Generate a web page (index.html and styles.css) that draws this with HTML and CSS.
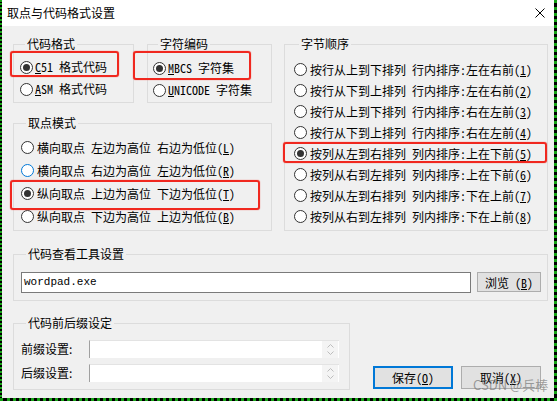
FILE: index.html
```html
<!DOCTYPE html>
<html lang="zh-CN">
<head>
<meta charset="utf-8">
<title>取点与代码格式设置</title>
<link rel="stylesheet" href="styles.css">
</head>
<body>
<div class="frame">
  <div class="window">
    <div class="titlebar">
      <span class="title">取点与代码格式设置</span>
      <svg class="close" width="10" height="10" viewBox="0 0 10 10"><path d="M0.5 0.5L9.5 9.5M9.5 0.5L0.5 9.5" stroke="#000" stroke-width="1" fill="none"/></svg>
    </div>
    <div class="body">
      <div class="top">
        <div class="leftcol">
          <div class="row1">
            <fieldset class="group g-code">
              <legend>代码格式</legend>
              <div class="opt"><span class="radio checked"></span><span class="lbl"><u>C</u>51 格式代码</span></div>
              <div class="opt"><span class="radio"></span><span class="lbl"><u>A</u>SM 格式代码</span></div>
            </fieldset>
            <fieldset class="group g-enc">
              <legend>字符编码</legend>
              <div class="opt"><span class="radio checked"></span><span class="lbl"><u>M</u>BCS 字符集</span></div>
              <div class="opt"><span class="radio"></span><span class="lbl"><u>U</u>NICODE 字符集</span></div>
            </fieldset>
          </div>
          <fieldset class="group g-mode">
            <legend>取点模式</legend>
            <div class="opt"><span class="radio"></span><span class="lbl">横向取点 左边为高位 右边为低位(<u>L</u>)</span></div>
            <div class="opt"><span class="radio hover"></span><span class="lbl">横向取点 右边为高位 左边为低位(<u>R</u>)</span></div>
            <div class="opt"><span class="radio checked"></span><span class="lbl">纵向取点 上边为高位 下边为低位(<u>T</u>)</span></div>
            <div class="opt"><span class="radio"></span><span class="lbl">纵向取点 下边为高位 上边为低位(<u>B</u>)</span></div>
          </fieldset>
        </div>
        <fieldset class="group g-order">
          <legend>字节顺序</legend>
          <div class="opt"><span class="radio"></span><span class="lbl">按行从上到下排列 行内排序:左在右前(<u>1</u>)</span></div>
          <div class="opt"><span class="radio"></span><span class="lbl">按行从下到上排列 行内排序:左在右前(<u>2</u>)</span></div>
          <div class="opt"><span class="radio"></span><span class="lbl">按行从上到下排列 行内排序:右在左前(<u>3</u>)</span></div>
          <div class="opt"><span class="radio"></span><span class="lbl">按行从下到上排列 行内排序:右在左前(<u>4</u>)</span></div>
          <div class="opt"><span class="radio checked"></span><span class="lbl">按列从左到右排列 列内排序:上在下前(<u>5</u>)</span></div>
          <div class="opt"><span class="radio"></span><span class="lbl">按列从右到左排列 列内排序:上在下前(<u>6</u>)</span></div>
          <div class="opt"><span class="radio"></span><span class="lbl">按列从左到右排列 列内排序:下在上前(<u>7</u>)</span></div>
          <div class="opt"><span class="radio"></span><span class="lbl">按列从右到左排列 列内排序:下在上前(<u>8</u>)</span></div>
        </fieldset>
      </div>

      <fieldset class="group g-tool">
        <legend>代码查看工具设置</legend>
        <div class="textfield">wordpad.exe</div>
        <div class="btn btn-browse">浏览 (<u>B</u>)</div>
      </fieldset>

      <div class="bottom">
        <fieldset class="group g-fix">
          <legend>代码前后缀设定</legend>
          <div class="fixrow">
            <span class="fixlabel">前缀设置:</span>
            <div class="spin"><div class="spin-text"></div><div class="spin-btns"><svg width="7" height="4" viewBox="0 0 7 4"><path d="M0.5 3.5L3.5 0.5L6.5 3.5" stroke="#bdbdbd" fill="none"/></svg><svg width="7" height="4" viewBox="0 0 7 4"><path d="M0.5 0.5L3.5 3.5L6.5 0.5" stroke="#bdbdbd" fill="none"/></svg></div></div>
          </div>
          <div class="fixrow">
            <span class="fixlabel">后缀设置:</span>
            <div class="spin"><div class="spin-text"></div><div class="spin-btns"><svg width="7" height="4" viewBox="0 0 7 4"><path d="M0.5 3.5L3.5 0.5L6.5 3.5" stroke="#bdbdbd" fill="none"/></svg><svg width="7" height="4" viewBox="0 0 7 4"><path d="M0.5 0.5L3.5 3.5L6.5 0.5" stroke="#bdbdbd" fill="none"/></svg></div></div>
          </div>
        </fieldset>
        <div class="actions">
          <div class="btn btn-main default">保存(<u>O</u>)</div>
          <div class="btn btn-main">取消(<u>X</u>)</div>
        </div>
      </div>
    </div>

    <div class="mark mark-1"></div>
    <div class="mark mark-2"></div>
    <div class="mark mark-3"></div>
    <div class="mark mark-4"></div>
    <div class="watermark">CSDN @兵棒</div>
  </div>
</div>
</body>
</html>
```

FILE: styles.css
```css
* { box-sizing: border-box; }
html, body { margin: 0; padding: 0; }
body {
  width: 557px;
  height: 401px;
  overflow: hidden;
  background: #000;
  font-family: "Noto Sans CJK SC", sans-serif;
  font-size: 12px;
  color: #000;
}
.frame {
  width: 557px;
  height: 401px;
  background: #000;
  border-left: 2px dotted #17a317;
  border-right: 3px dotted #17a317;
  border-bottom: 3px dotted #17a317;
}
.window {
  position: relative;
  width: 552px;
  height: 398px;
  display: flex;
  flex-direction: column;
  background: #f0f0f0;
}
.titlebar {
  height: 26px;
  flex: 0 0 26px;
  background: #fff;
  display: flex;
  align-items: center;
  justify-content: space-between;
  padding: 0 9px 0 5px;
}
.title { font-size: 12px; line-height: 16px; }
.close { display: block; }

.body {
  flex: 1;
  display: flex;
  flex-direction: column;
  padding: 10px 6px 0 11px;
}

.top {
  display: grid;
  grid-template-columns: 259px 264px;
  column-gap: 12px;
  height: 195px;
}
.leftcol {
  display: flex;
  flex-direction: column;
  gap: 12px;
}
.row1 {
  display: grid;
  grid-template-columns: 121px 125px;
  column-gap: 13px;
  height: 67px;
}

.group {
  margin: 0;
  min-width: 0;
  border: 1px solid #dcdcdc;
  padding: 0;
  display: flex;
  flex-direction: column;
}
.group legend {
  margin-left: 5px;
  padding: 0 2px;
  font-size: 12px;
  line-height: 16px;
  height: 16px;
}

.opt {
  display: flex;
  align-items: center;
  white-space: nowrap;
  height: 22px;
  gap: 2px;
}
.lbl {
  font-family: "Noto Sans Mono CJK SC", "Liberation Mono", "Noto Sans CJK SC", monospace;
  font-size: 12px;
  line-height: 14px;
}
.lbl u { text-underline-offset: 1px; }

.radio {
  flex: 0 0 13px;
  width: 13px;
  height: 13px;
  border-radius: 50%;
  border: 1px solid #333;
  background: #fff;
  position: relative;
}
.radio.hover { border-color: #0078d7; }
.radio.checked::after {
  content: "";
  position: absolute;
  left: 2px;
  top: 2px;
  width: 7px;
  height: 7px;
  border-radius: 50%;
  background: #333;
}

.g-code { height: 67px; padding: 4px 0 0 6px; }
.g-enc { height: 67px; padding: 5px 0 0 5px; }
.g-mode { height: 116px; padding: 5px 0 0 7px; }
.g-mode .opt { height: 23px; gap: 3px; }
.g-order { height: 195px; padding: 7px 0 0 9px; }
.g-order .opt { height: 21px; gap: 3px; }

.g-tool {
  margin-top: 15px;
  height: 55px;
  flex-direction: row;
  align-items: flex-start;
  gap: 6px;
  padding: 10px 6px 0 7px;
}
.textfield {
  flex: 1;
  height: 21px;
  background: #fff;
  border: 1px solid #7a7a7a;
  padding: 0 2px;
  font-family: "Liberation Mono", monospace;
  font-size: 11px;
  line-height: 19px;
}
.btn {
  display: flex;
  align-items: center;
  justify-content: center;
  background: #e1e1e1;
  border: 1px solid #adadad;
  font-family: "Noto Sans Mono CJK SC", "Liberation Mono", "Noto Sans CJK SC", monospace;
  font-size: 12px;
  white-space: nowrap;
}
.btn-browse { width: 64px; height: 20px; }

.bottom {
  margin-top: 14px;
  display: flex;
  align-items: flex-end;
}
.g-fix {
  width: 337px;
  height: 75px;
  padding: 9px 10px 0 7px;
  gap: 6px;
}
.fixrow {
  display: flex;
  align-items: center;
  height: 18px;
}
.fixlabel {
  width: 68px;
  font-size: 12px;
  line-height: 16px;
}
.spin {
  width: 250px;
  height: 18px;
  display: flex;
  background: #fff;
  border-left: 1px solid #a0a0a0;
  border-top: 1px solid #e3e3e3;
}
.spin-text { flex: 1; }
.spin-btns {
  width: 17px;
  background: #f4f4f4;
  border-right: 1px solid #fff;
  display: flex;
  flex-direction: column;
  align-items: center;
  justify-content: center;
  gap: 3px;
}
.spin-btns svg { display: block; }

.actions {
  margin-left: auto;
  margin-right: 7px;
  margin-bottom: 1px;
  display: flex;
  gap: 8px;
}
.btn-main { width: 80px; height: 23px; }
.btn-main.default { border: 2px solid #0078d7; }

.mark {
  position: absolute;
  border: 2px solid #f0281f;
  border-radius: 3px;
  box-shadow: 0 0 1px #f0281f;
  pointer-events: none;
}
.mark-1 { left: 8px; top: 51px; width: 109px; height: 26px; }
.mark-2 { left: 131px; top: 51px; width: 118px; height: 29px; }
.mark-3 { left: 8px; top: 180px; width: 250px; height: 30px; }
.mark-4 { left: 281px; top: 142px; width: 264px; height: 21px; }

.watermark {
  position: absolute;
  left: 471px;
  top: 377px;
  font-size: 13px;
  line-height: 16px;
  color: rgba(120, 120, 120, 0.7);
  pointer-events: none;
  white-space: nowrap;
}
```
